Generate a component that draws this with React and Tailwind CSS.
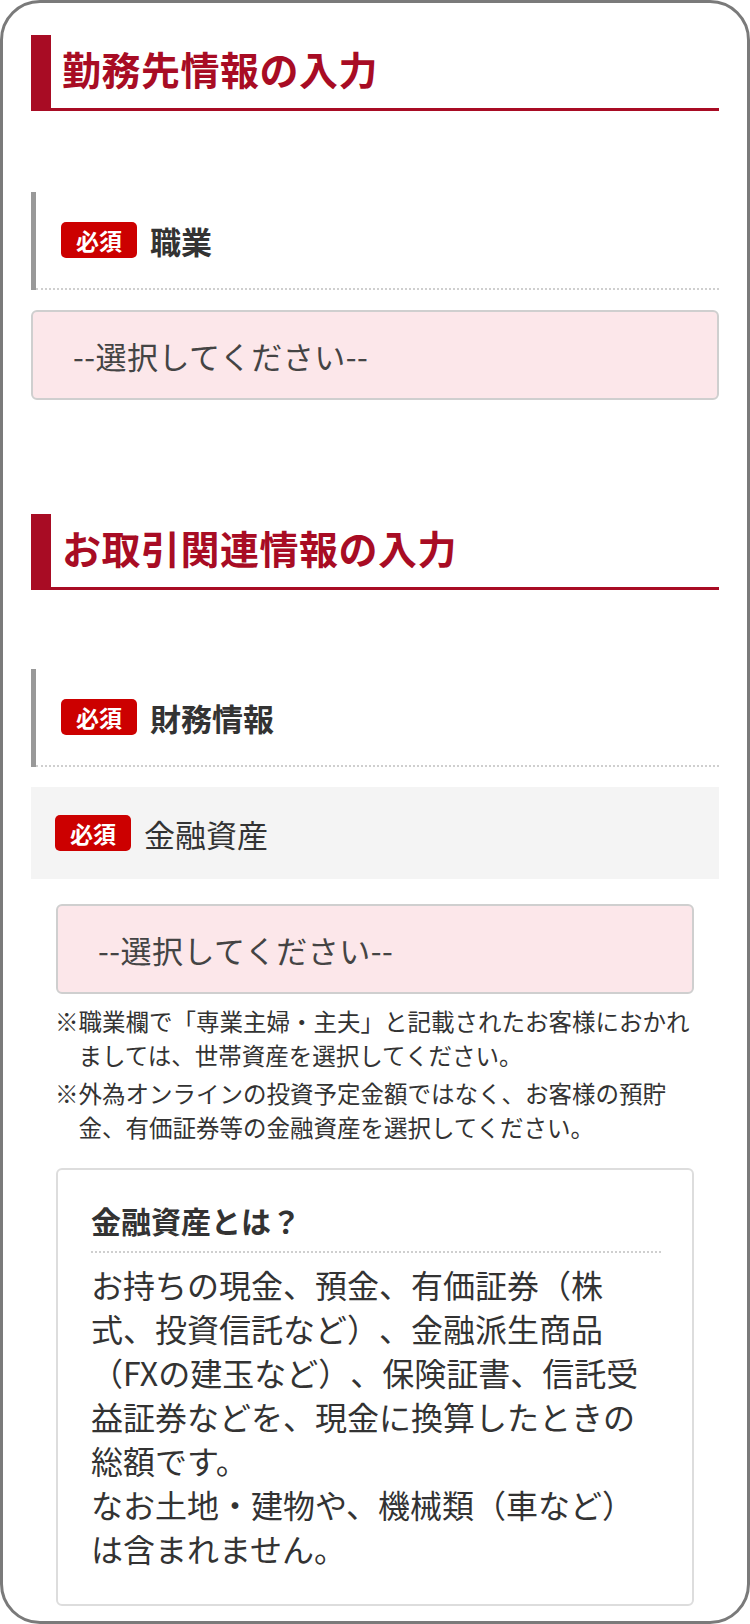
const FONT = { fontFamily: '"Noto Sans CJK JP", "Noto Sans", sans-serif' }

function SectionTitle({ children, className = "" }) {
  return (
    <div className={`flex items-center h-[76px] border-l-[20px] border-b-[3px] border-[#a80c24] ${className}`}>
      <h2 className="pl-[11px] pb-[6px] text-[39px] font-bold leading-none text-[#a80c24] tracking-[0.5px]">{children}</h2>
    </div>
  )
}

function Badge({ className = "" }) {
  return (
    <span className={`inline-flex items-center justify-center w-[76px] h-[36px] rounded-[5px] bg-[#cc0000] text-white text-[23px] font-bold leading-none shrink-0 ${className}`}>
      必須
    </span>
  )
}

function FieldLabel({ children, className = "" }) {
  return (
    <div className={`h-[98px] border-l-[5px] border-[#999] ${className}`}>
      <div className="flex items-center h-full pl-[25px] border-b-2 border-dotted border-[#cfcfcf]">
        <Badge />
        <span className="ml-[13px] text-[31px] font-bold text-[#333] leading-none">{children}</span>
      </div>
    </div>
  )
}

function SelectBox({ className = "" }) {
  return (
    <div className={`flex items-center h-[90px] pl-[40px] rounded-[6px] border-2 border-[#cfcfcf] bg-[#fce7ea] ${className}`}>
      <span className="text-[31px] tracking-[0.5px] text-[#444] leading-none">--選択してください--</span>
    </div>
  )
}

export default function App() {
  return (
    <div style={FONT} className="w-[750px] h-[1624px] bg-white [text-spacing-trim:space-all]">
      <div className="h-full border-[3px] border-[#7a7a7a] rounded-[40px] overflow-hidden px-[28px] pt-[32px]">
        <SectionTitle>勤務先情報の入力</SectionTitle>

        <FieldLabel className="mt-[81px]">職業</FieldLabel>
        <SelectBox className="mt-[20px]" />

        <SectionTitle className="mt-[114px]">お取引関連情報の入力</SectionTitle>

        <FieldLabel className="mt-[79px]">財務情報</FieldLabel>

        <div className="mt-[20px] flex items-center h-[92px] pl-[24px] bg-[#f4f4f4]">
          <Badge />
          <span className="ml-[13px] text-[31px] text-[#333] leading-none">金融資産</span>
        </div>

        <div className="px-[25px]">
          <SelectBox className="mt-[25px]" />

          <div className="mt-[10px] -ml-[1px] text-[23.5px] leading-[34px] text-[#333]">
            <p className="pl-[1em] -indent-[1em] whitespace-nowrap">
              ※職業欄で「専業主婦・主夫」と記載されたお客様におかれ<br />ましては、世帯資産を選択してください。
            </p>
            <p className="mt-[4px] pl-[1em] -indent-[1em] whitespace-nowrap">
              ※外為オンラインの投資予定金額ではなく、お客様の預貯<br />金、有価証券等の金融資産を選択してください。
            </p>
          </div>

          <div className="mt-[24px] h-[438px] rounded-[6px] border-2 border-[#dddddd] bg-white pl-[33px] pr-[31px] pt-[29px]">
            <h3 className="pb-[10px] border-b-2 border-dotted border-[#cfcfcf] text-[30px] leading-[42px] font-bold text-[#333]">
              金融資産とは？
            </h3>
            <p className="mt-[9px] text-[32px] leading-[44px] text-[#333] whitespace-nowrap">
              お持ちの現金、預金、有価証券（株<br />
              式、投資信託など）、金融派生商品<br />
              （FXの建玉など）、保険証書、信託受<br />
              益証券などを、現金に換算したときの<br />
              総額です。<br />
              なお土地・建物や、機械類（車など）<br />
              は含まれません。
            </p>
          </div>
        </div>
      </div>
    </div>
  )
}
